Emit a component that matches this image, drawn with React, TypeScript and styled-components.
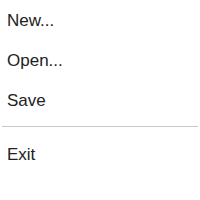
import React from "react";
import styled, { createGlobalStyle } from "styled-components";

const GlobalStyle = createGlobalStyle`
  html, body {
    margin: 0;
    padding: 0;
    background: #fff;
  }
`;

const Menu = styled.ul`
  list-style: none;
  margin: 0;
  padding: 1px 2px 0;
  width: 196px;
  font-family: "Liberation Sans", Arial, sans-serif;
`;

const Item = styled.li`
  height: 40px;
  line-height: 40px;
  padding: 0 5px;
  font-size: 17px;
  color: #222;
  cursor: default;
`;

const Separator = styled.li`
  height: 1px;
  margin: 5px 0 8px;
  background: #c8c8c8;
`;

const items = ["New...", "Open...", "Save"];

const App: React.FC = () => {
  return (
    <>
      <GlobalStyle />
      <Menu>
        {items.map((label) => (
          <Item key={label}>{label}</Item>
        ))}
        <Separator />
        <Item>Exit</Item>
      </Menu>
    </>
  );
};

export default App;
